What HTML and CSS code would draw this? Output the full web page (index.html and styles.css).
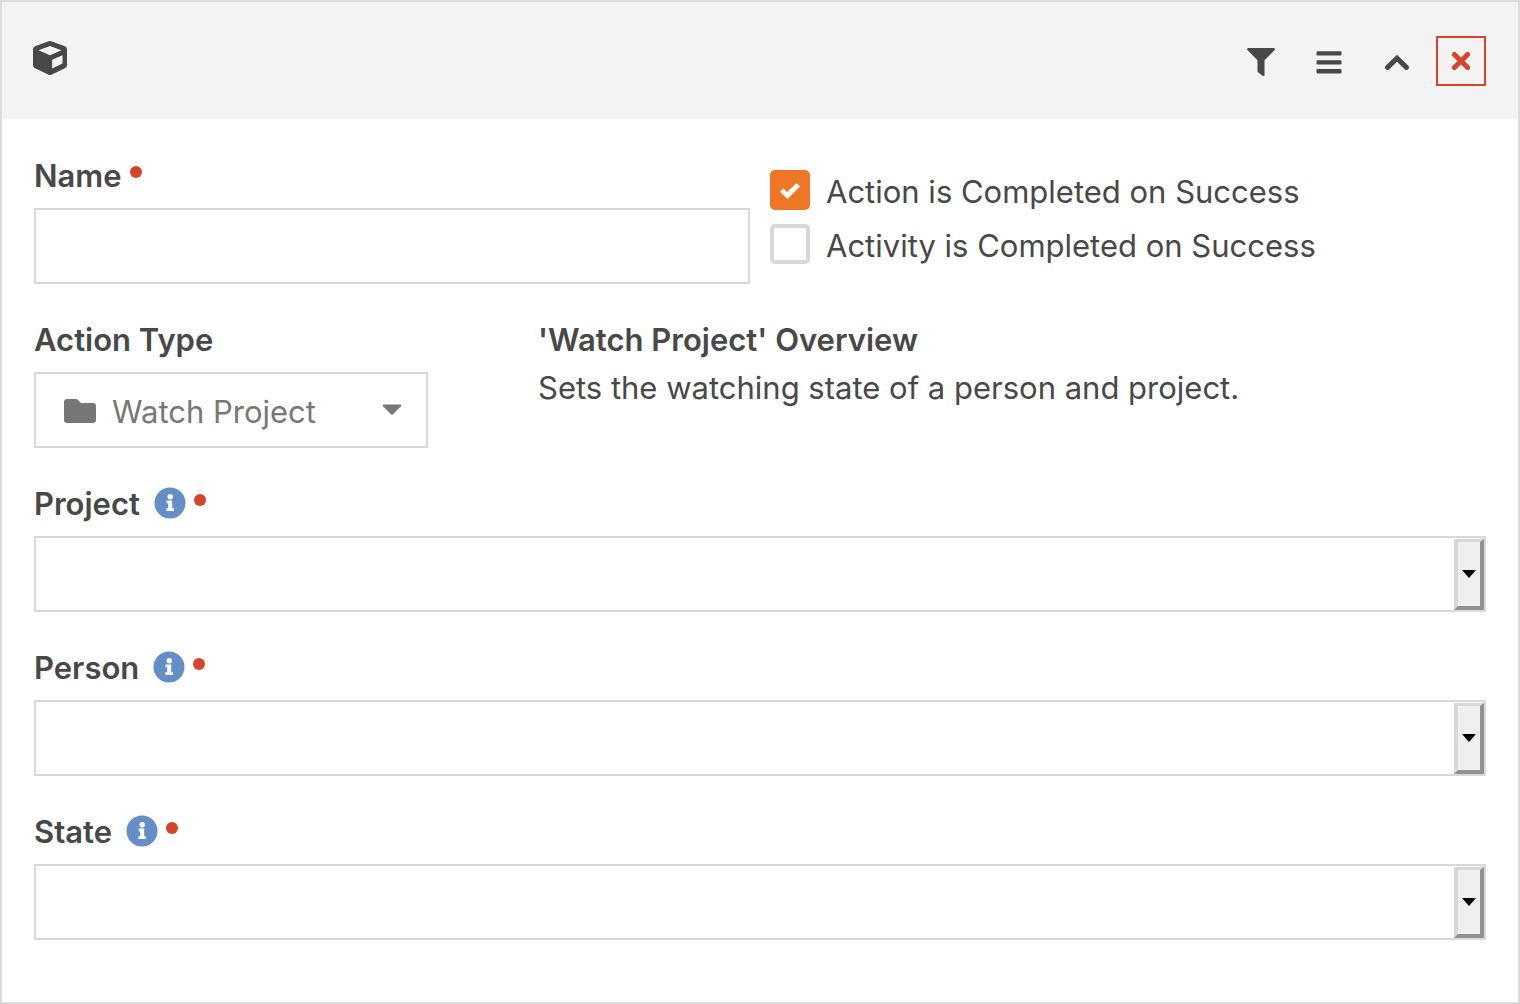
FILE: index.html
```html
<!DOCTYPE html>
<html lang="en">
<head>
    <meta charset="UTF-8">
    <meta name="viewport" content="width=device-width, initial-scale=1.0">
    <title>Watch Project</title>
    <link rel="stylesheet" href="styles.css">
</head>
<body>
    <section class="panel">
        <header class="panel-header">
            <svg class="cube" viewBox="0 0 32 32" width="34" height="34" aria-hidden="true">
                <path fill-rule="evenodd" d="M14.8 .3Q16-.2 17.2 .3L30 5Q32 5.8 32 7.8V22.8Q32 24.7 30.4 25.5L17.3 31.7Q16 32.3 14.7 31.7L1.6 25.5Q0 24.7 0 22.8V7.8Q0 5.8 2 5ZM16 4.7L5.2 8.8L16 13.3L26.8 8.8ZM18 17.6V25.8L27.8 21.2V13.4Z"/>
            </svg>
            <div class="panel-actions">
                <button type="button" class="icon-btn" aria-label="Filter">
                    <svg viewBox="0 0 28 28" width="28" height="28"><path d="M1 0H27Q28.5 .8 27.6 2L17.5 12.3V27Q17.5 28.6 16 28L11.4 24.6Q10.5 24 10.5 23V12.3L.4 2Q-.5 .8 1 0Z"/></svg>
                </button>
                <button type="button" class="icon-btn" aria-label="Menu">
                    <svg viewBox="0 0 26 24" width="26" height="24"><path d="M1.5 1.2H24.5Q25.5 1.2 25.5 2.2V4.6Q25.5 5.6 24.5 5.6H1.5Q.5 5.6 .5 4.6V2.2Q.5 1.2 1.5 1.2ZM1.5 10.2H24.5Q25.5 10.2 25.5 11.2V13.4Q25.5 14.4 24.5 14.4H1.5Q.5 14.4 .5 13.4V11.2Q.5 10.2 1.5 10.2ZM1.5 19H24.5Q25.5 19 25.5 20V22.4Q25.5 23.4 24.5 23.4H1.5Q.5 23.4 .5 22.4V20Q.5 19 1.5 19Z"/></svg>
                </button>
                <button type="button" class="icon-btn" aria-label="Collapse">
                    <svg viewBox="0 0 24 16" width="24" height="16"><path class="stroke" d="M2.6 13.4L12 4.2L21.4 13.4"/></svg>
                </button>
                <button type="button" class="icon-btn delete-btn" aria-label="Delete">
                    <svg viewBox="0 0 20 20" width="20" height="20"><path class="stroke" d="M3.4 3.4L16.6 16.6M16.6 3.4L3.4 16.6"/></svg>
                </button>
            </div>
        </header>

        <form class="panel-body">
            <div class="row halves">
                <div class="field">
                    <label class="field-label" for="name">Name<span class="required"></span></label>
                    <input type="text" class="text-box" id="name" name="name" required>
                </div>
                <div class="checks">
                    <label class="check"><input type="checkbox" name="actionCompleted" checked>Action is Completed on Success</label>
                    <label class="check"><input type="checkbox" name="activityCompleted">Activity is Completed on Success</label>
                </div>
            </div>

            <div class="row thirds">
                <div class="field">
                    <label class="field-label" for="actionType">Action Type</label>
                    <div class="picker">
                        <svg class="folder" viewBox="0 0 32 24" width="32" height="24"><path d="M3 0H12Q13 0 13.8 .8L17 4H29Q32 4 32 7V21Q32 24 29 24H3Q0 24 0 21V3Q0 0 3 0Z"/></svg>
                        <select id="actionType" name="actionType">
                            <option>Watch Project</option>
                        </select>
                        <svg class="caret" viewBox="0 0 20 12" width="20" height="12"><path d="M1.5 .5H18.5Q20 .8 19 2.2L11 10.2Q10 11.2 9 10.2L1 2.2Q0 .8 1.5 .5Z"/></svg>
                    </div>
                </div>
                <div class="overview">
                    <h2>'Watch Project' Overview</h2>
                    <p>Sets the watching state of a person and project.</p>
                </div>
            </div>

            <div class="field">
                <label class="field-label" for="project">Project
                    <svg class="info" viewBox="0 0 32 32" width="32" height="32"><circle cx="16" cy="16" r="15.5"/><path d="M12.6 13.4H18.2V21.2H20V24H12.4V21.2H14.2V16.2H12.6Z"/><circle class="tittle" cx="16.2" cy="9.8" r="2.7"/></svg>
                    <span class="required"></span>
                </label>
                <div class="combo">
                    <input type="text" id="project" name="project" required>
                    <button type="button" aria-label="Show projects"><svg viewBox="0 0 14 8" width="14" height="8"><path d="M0 0H14L7 8Z"/></svg></button>
                </div>
            </div>

            <div class="field">
                <label class="field-label" for="person">Person
                    <svg class="info" viewBox="0 0 32 32" width="32" height="32"><circle cx="16" cy="16" r="15.5"/><path d="M12.6 13.4H18.2V21.2H20V24H12.4V21.2H14.2V16.2H12.6Z"/><circle class="tittle" cx="16.2" cy="9.8" r="2.7"/></svg>
                    <span class="required"></span>
                </label>
                <div class="combo">
                    <input type="text" id="person" name="person" required>
                    <button type="button" aria-label="Show people"><svg viewBox="0 0 14 8" width="14" height="8"><path d="M0 0H14L7 8Z"/></svg></button>
                </div>
            </div>

            <div class="field">
                <label class="field-label" for="state">State
                    <svg class="info" viewBox="0 0 32 32" width="32" height="32"><circle cx="16" cy="16" r="15.5"/><path d="M12.6 13.4H18.2V21.2H20V24H12.4V21.2H14.2V16.2H12.6Z"/><circle class="tittle" cx="16.2" cy="9.8" r="2.7"/></svg>
                    <span class="required"></span>
                </label>
                <div class="combo">
                    <input type="text" id="state" name="state" required>
                    <button type="button" aria-label="Show states"><svg viewBox="0 0 14 8" width="14" height="8"><path d="M0 0H14L7 8Z"/></svg></button>
                </div>
            </div>
        </form>
    </section>
</body>
</html>
```
FILE: styles.css
```css
* {
    box-sizing: border-box;
}
body {
    margin: 0;
    background: white;
    color: #484848;
    font-family: Inter, "Liberation Sans", sans-serif;
    font-size: 31px;
    line-height: 48px;
}
input, select, button {
    font: inherit;
    color: inherit;
}
svg {
    display: block;
    flex: none;
    fill: currentColor;
}
.stroke {
    fill: none;
    stroke: currentColor;
    stroke-width: 5;
    stroke-linecap: round;
}
.panel {
    min-height: 100vh;
    border: 2px solid #dbdbdb;
}
.panel-header {
    display: flex;
    justify-content: space-between;
    align-items: flex-start;
    padding: 34px 32px 33px;
    background: #f3f3f3;
}
.cube {
    margin: 5px 0 0 -1px;
}
.panel-actions {
    display: flex;
}
.icon-btn {
    display: flex;
    align-items: center;
    justify-content: center;
    width: 68px;
    height: 50px;
    padding: 2px 0 0;
    border: 0;
    background: none;
    cursor: pointer;
}
.delete-btn {
    width: 50px;
    margin-left: 5px;
    padding: 0;
    border: 2px solid #d7432d;
    color: #d7432d;
}
.panel-body {
    display: flex;
    flex-direction: column;
    gap: 32px;
    padding: 33px 32px 62px;
}
.row {
    display: flex;
    gap: 20px;
}
.halves > * {
    flex: 1;
}
.thirds .field {
    flex: 0 0 calc(100% / 3);
}
.field-label {
    display: flex;
    align-items: center;
    gap: 8px;
    margin-bottom: 8px;
    font-weight: 600;
}
.required {
    width: 12px;
    height: 12px;
    margin-bottom: 9px;
    border-radius: 50%;
    background: #d7432d;
}
.info {
    margin: 0 0 2px 6px;
    fill: #638ec6;
}
.info path, .info .tittle {
    fill: white;
}
.text-box, .combo, .picker {
    width: 100%;
    height: 76px;
    border: 2px solid #d8d8d8;
    background: white;
}
.text-box {
    display: block;
    padding: 0 16px;
}
.checks {
    display: flex;
    flex-direction: column;
    gap: 6px;
    padding-top: 16px;
}
.check {
    display: flex;
    align-items: center;
    gap: 16px;
}
.check input {
    appearance: none;
    width: 40px;
    height: 40px;
    margin: 0 0 4px;
    border: 4px solid #d8d8d8;
    border-radius: 5px;
    background: white;
}
.check input:checked {
    border-color: #ee7725;
    background: #ee7725;
}
.check input:checked::before {
    content: "";
    display: block;
    width: 20px;
    height: 16px;
    margin: 9px 6px;
    background: white;
    clip-path: polygon(0 55%, 17% 35%, 36% 56%, 82% 0, 100% 20%, 38% 100%);
}
.picker {
    position: relative;
    width: 394px;
    color: #777;
}
.picker select {
    appearance: none;
    width: 100%;
    height: 100%;
    padding: 4px 48px 0 76px;
    border: 0;
    background: none;
}
.folder, .caret {
    position: absolute;
    top: 25px;
    left: 28px;
    pointer-events: none;
}
.caret {
    top: 30px;
    right: 24px;
    left: auto;
}
.overview h2, .overview p {
    margin: 0;
    font-size: inherit;
    font-weight: 600;
}
.overview p {
    font-weight: 400;
}
.combo {
    display: flex;
}
.combo input {
    flex: 1;
    min-width: 0;
    padding: 0 16px;
    border: 0;
    background: none;
}
.combo button {
    display: flex;
    align-items: center;
    justify-content: center;
    width: 30px;
    margin-top: 1px;
    padding: 0;
    border: 4px solid;
    border-top-width: 3px;
    border-color: #d8d8d8 #919191 #919191 #d8d8d8;
    background: #efefef;
    color: black;
}
```
